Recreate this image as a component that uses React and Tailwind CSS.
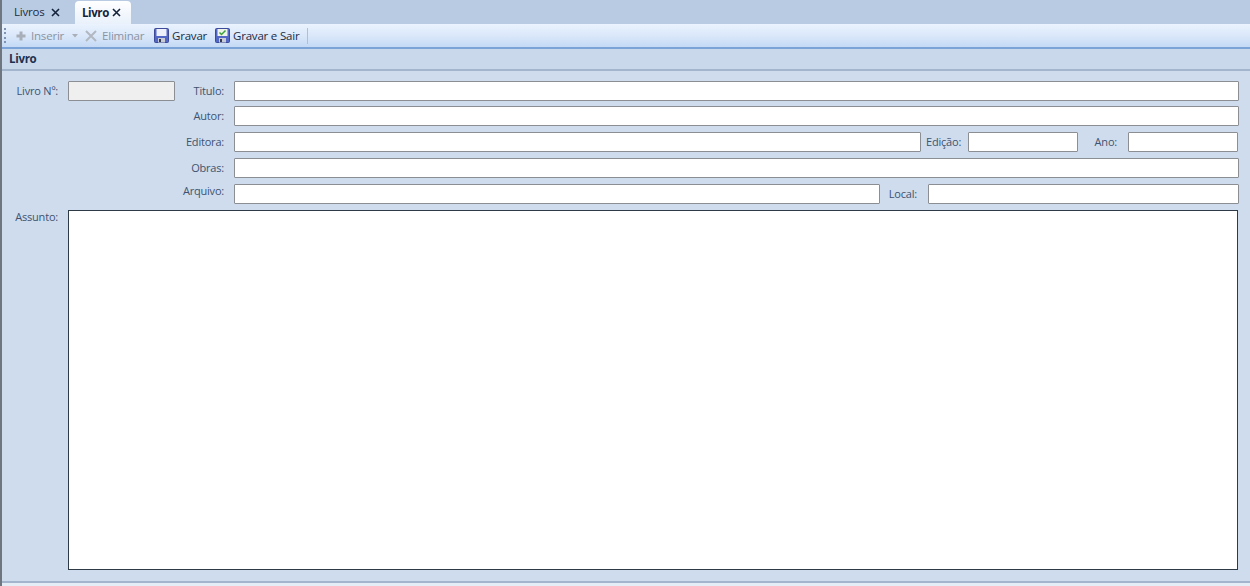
function Label({ children, className = "" }) {
  return <span className={`shrink-0 text-right text-[11px] leading-[14px] tracking-[-0.2px] text-[#40536e] ${className}`}>{children}</span>;
}

function Field({ className = "flex-1 bg-white" }) {
  return <div className={`h-5 min-w-0 rounded-[1px] border border-[#8b8f94] ${className}`}></div>;
}

function CloseIcon({ className = "" }) {
  return (
    <svg width="9" height="9" viewBox="0 0 9 9" className={className}>
      <path d="M1 1L8 8M8 1L1 8" stroke="#15233a" strokeWidth="1.6" fill="none" />
    </svg>
  );
}

function Floppy({ check }) {
  return (
    <svg width="15" height="15" viewBox="0 0 15 15" className="shrink-0">
      <rect x="0.5" y="0.5" width="14" height="14" rx="1" fill="#5367c4" stroke="#3d4a9a" />
      <rect x="2.5" y="1" width="10" height="7" fill={check ? "#eef3ea" : "#eef1fa"} />
      <rect x="4" y="10" width="7" height="4.5" fill="#c9ccd6" />
      <rect x="5" y="11" width="2" height="3" fill="#343a52" />
      {check && <path d="M4.5 4.5L6.5 6.5L10.5 2.5" stroke="#3da03a" strokeWidth="1.5" fill="none" />}
    </svg>
  );
}

function Row({ children }) {
  return <div className="flex h-5 items-center">{children}</div>;
}

export default function App() {
  return (
    <div className="flex h-[586px] w-[1250px] flex-col overflow-hidden border-l-2 border-[#6f7680] bg-[#cfdcee] font-['Open_Sans',sans-serif]">
      {/* tabs */}
      <div className="flex h-6 shrink-0 items-end bg-[#b9cbe3] pl-[3px]">
        <div className="flex h-6 w-[70px] items-center pl-[9px] text-[11.5px] tracking-[-0.2px] text-[#1c2c44]">
          Livros
          <CloseIcon className="ml-[6px]" />
        </div>
        <div className="flex h-[23px] w-[56px] items-center rounded-t-[4px] bg-gradient-to-b from-white to-[#e9f1fb] pl-[7px] text-[11.5px] font-bold tracking-[-0.4px] text-[#15233a]">
          Livro
          <CloseIcon className="ml-[3px]" />
        </div>
      </div>

      {/* toolbar */}
      <div className="flex h-[25px] shrink-0 items-center border-b-2 border-[#7ba3d8] bg-gradient-to-b from-[#eaf3fe] via-[#dbe8fa] to-[#c4d9f5] text-[11.5px] tracking-[-0.2px]">
        <div className="ml-[2px] flex h-[18px] w-[2px] flex-col justify-between py-[1px]">
          <span className="block h-[2px] w-[2px] bg-[#7f93b0]"></span>
          <span className="block h-[2px] w-[2px] bg-[#7f93b0]"></span>
          <span className="block h-[2px] w-[2px] bg-[#7f93b0]"></span>
          <span className="block h-[2px] w-[2px] bg-[#7f93b0]"></span>
        </div>
        <svg width="10" height="10" viewBox="0 0 10 10" className="ml-[10px]">
          <path d="M5 0.5V9.5M0.5 5H9.5" stroke="#a9afb8" strokeWidth="3" fill="none" />
        </svg>
        <span className="ml-[5px] w-[32px] text-[#8a94a3]">Inserir</span>
        <svg width="6" height="4" viewBox="0 0 6 4" className="ml-[9px]">
          <path d="M0 0H6L3 3.5Z" fill="#a9afb8" />
        </svg>
        <svg width="12" height="12" viewBox="0 0 12 12" className="ml-[7px]">
          <path d="M1 1L11 11M11 1L1 11" stroke="#b2b8c1" strokeWidth="2" fill="none" />
        </svg>
        <span className="ml-[5px] w-[44px] text-[#8a94a3]">Eliminar</span>
        <span className="ml-[8px]"><Floppy /></span>
        <span className="ml-[3px] w-[35px] text-[#1c2c44]">Gravar</span>
        <span className="ml-[8px]"><Floppy check /></span>
        <span className="ml-[3px] w-[66px] whitespace-nowrap text-[#1c2c44]">Gravar e Sair</span>
        <div className="ml-[8px] h-[16px] w-[1px] bg-[#a9c0de]"></div>
      </div>

      {/* section header */}
      <div className="flex h-[22px] shrink-0 items-center border-b-2 border-[#a3b5cd] bg-[#c9d8eb] pl-[7px] text-[11.5px] font-bold tracking-[-0.3px] text-[#1c3150]">
        Livro
      </div>

      {/* form */}
      <div className="flex flex-1 flex-col pr-[11px] pt-[10px]">
        <Row>
          <Label className="w-[56px]">Livro Nº:</Label>
          <Field className="ml-[10px] w-[107px] bg-[#efefef]" />
          <Label className="w-[49px]">Titulo:</Label>
          <Field className="ml-[10px] flex-1 bg-white" />
        </Row>
        <div className="mt-[5px] flex flex-col gap-[6px]">
          <Row>
            <Label className="w-[222px]">Autor:</Label>
            <Field className="ml-[10px] flex-1 bg-white" />
          </Row>
          <Row>
            <Label className="w-[222px]">Editora:</Label>
            <Field className="ml-[10px] w-[687px] bg-white" />
            <Label className="ml-[5px] w-[35px]">Edição:</Label>
            <Field className="ml-[7px] w-[110px] bg-white" />
            <Label className="w-[39px]">Ano:</Label>
            <Field className="ml-[11px] mr-[1px] flex-1 bg-white" />
          </Row>
          <Row>
            <Label className="w-[222px]">Obras:</Label>
            <Field className="ml-[10px] flex-1 bg-white" />
          </Row>
          <Row>
            <Label className="mb-[6px] w-[222px]">Arquivo:</Label>
            <Field className="ml-[10px] w-[646px] bg-white" />
            <Label className="w-[37px]">Local:</Label>
            <Field className="ml-[11px] flex-1 bg-white" />
          </Row>
          <div className="flex h-[360px]">
            <Label className="w-[56px]">Assunto:</Label>
            <div className="ml-[10px] mr-[1px] flex-1 border border-[#2f3a47] bg-white"></div>
          </div>
        </div>
      </div>

      {/* bottom edge */}
      <div className="h-[2px] shrink-0 bg-[#a3b5cd]"></div>
      <div className="h-[3px] shrink-0 bg-[#e4ecf6]"></div>
    </div>
  );
}
